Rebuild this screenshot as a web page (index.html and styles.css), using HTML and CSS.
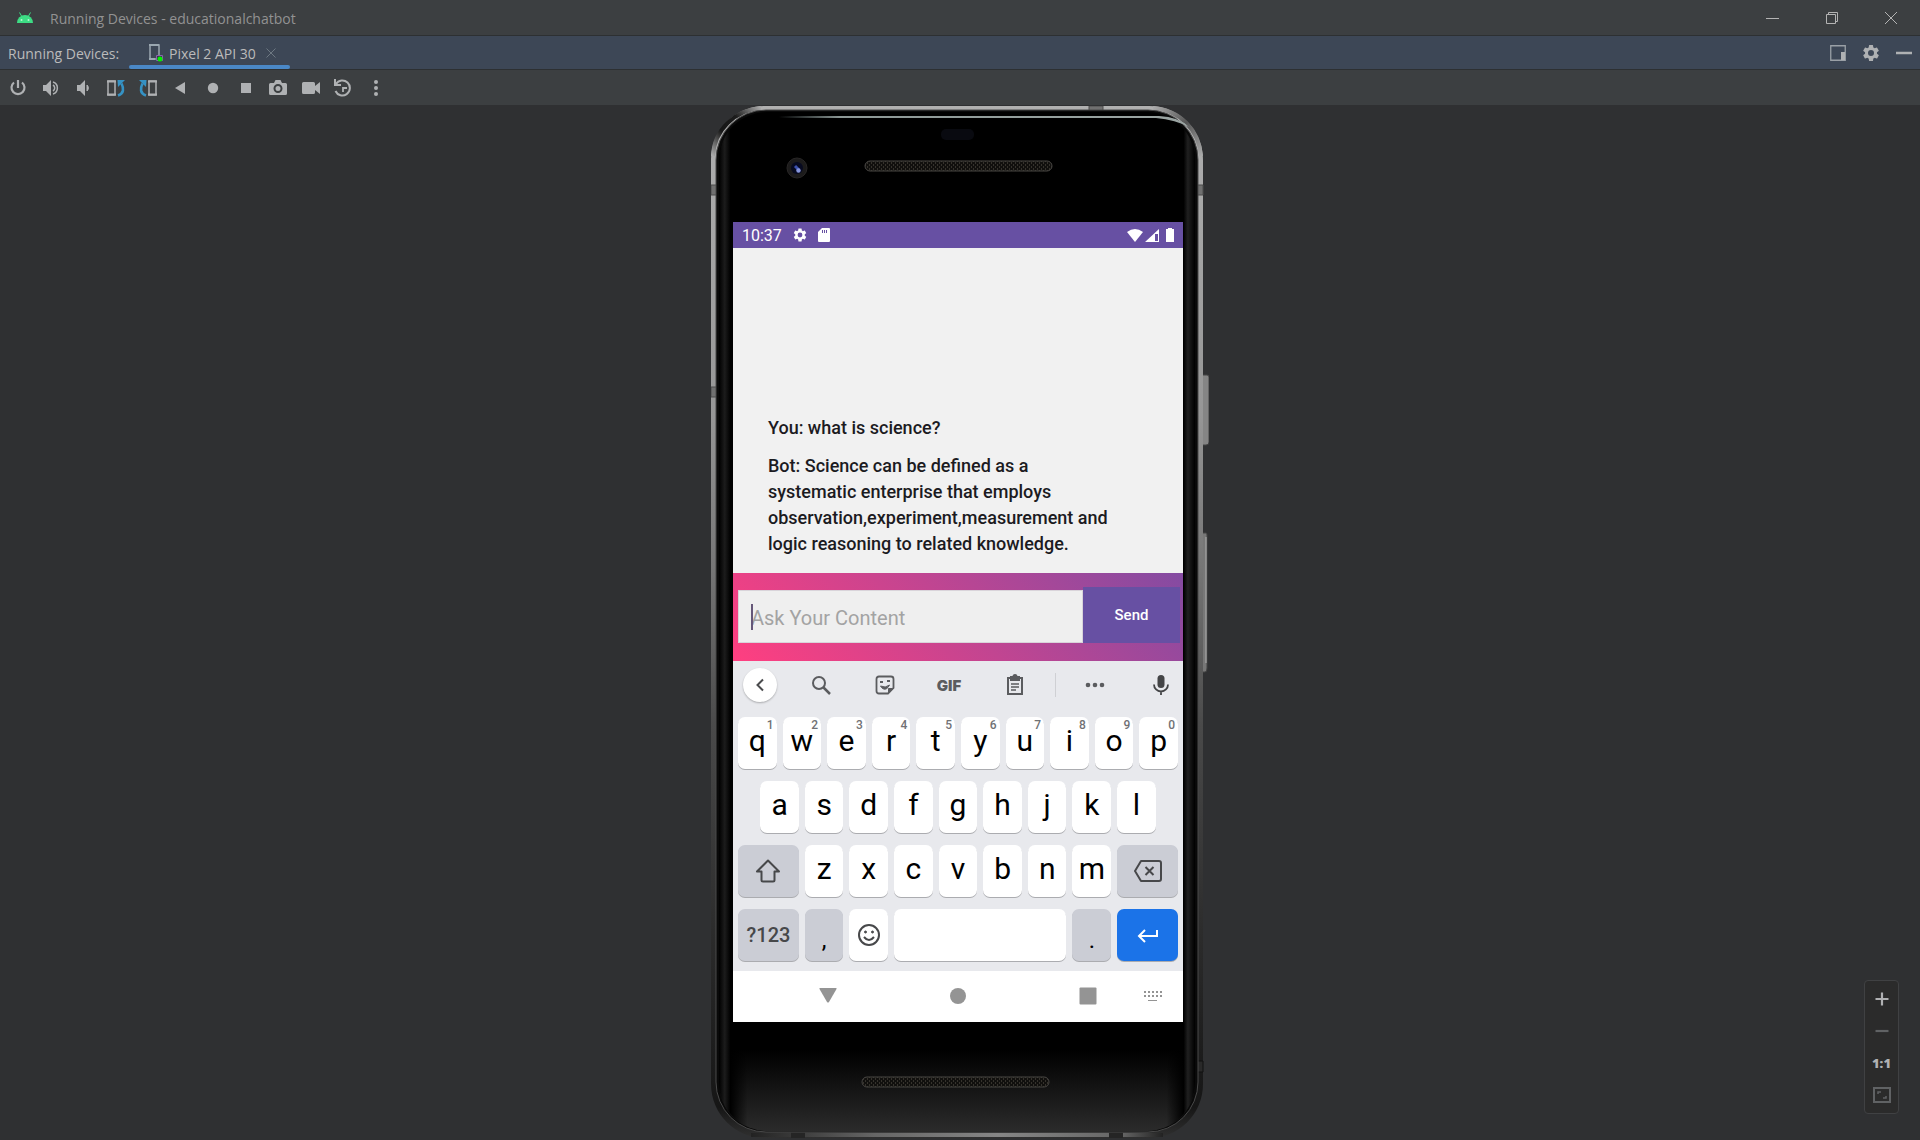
FILE: index.html
```html
<!DOCTYPE html>
<html lang="en">
<head>
<meta charset="utf-8">
<meta name="viewport" content="width=device-width, initial-scale=1">
<title>Running Devices - educationalchatbot</title>
<link rel="stylesheet" href="styles.css">
</head>
<body>
<header class="titlebar">
  <svg class="logo" width="18" height="12" viewBox="0 0 18 12"><path d="M1 11a8 8 0 0 1 16 0z" fill="#3ddc84"/><path d="M3.500.5 5.500 4M14.500.5 12.500 4" stroke="#3ddc84" stroke-width="1"/><circle cx="5.500" cy="8" r="1" fill="#b9f5d2"/><circle cx="12.500" cy="8" r="1" fill="#b9f5d2"/></svg>
  <h1 class="window-title">Running Devices - educationalchatbot</h1>
  <div class="window-controls">
    <button aria-label="Minimize"><svg width="14" height="14" viewBox="0 0 14 14"><path d="M0 7.500h13" stroke="#b4b4b4"/></svg></button>
    <button aria-label="Restore"><svg width="14" height="14" viewBox="0 0 14 14" fill="none" stroke="#b4b4b4"><path d="M1.500 3.500h9v9h-9zM3.500 3V1.500h9v9H11"/></svg></button>
    <button aria-label="Close"><svg width="14" height="14" viewBox="0 0 14 14"><path d="m1 1 12 12M13 1 1 13" stroke="#b4b4b4"/></svg></button>
  </div>
</header>

<nav class="tabbar">
  <span class="tabbar-label">Running Devices:</span>
  <div class="tab">
    <svg width="16" height="18" viewBox="0 0 16 18"><path d="M2 1h9v11M2 1v14h6" fill="none" stroke="#9aa7b0" stroke-width="1.500"/><path d="M1 1h10M1 15h6" stroke="#9aa7b0" stroke-width="2"/><path d="M8.500 11.500h6v5h-6z" fill="#3d3450" stroke="#8a63b0"/><circle cx="12" cy="15" r="2.500" fill="#00f000"/></svg>
    <a href="#device" class="tab-name">Pixel 2 API 30</a>
    <button class="tab-close" aria-label="Close tab"><svg width="10" height="10" viewBox="0 0 10 10"><path d="m.5.5 9 9m0-9-9 9" stroke="#6d7882"/></svg></button>
  </div>
  <div class="tab-tools">
    <button aria-label="Dock"><svg width="16" height="16" viewBox="0 0 16 16"><path d="M.75.75h14.500v14.500H.75z" fill="none" stroke="#9aa0a6" stroke-width="1.300"/><path d="M11 7h4v8h-4z" fill="#afb1b3"/></svg></button>
    <button aria-label="Settings"><svg width="20" height="20" viewBox="0 0 24 24"><use href="#gear" fill="#afb1b3"/></svg></button>
    <button aria-label="Hide"><svg width="16" height="16" viewBox="0 0 16 16"><path d="M0 8h16" stroke="#afb1b3" stroke-width="2.500"/></svg></button>
  </div>
</nav>

<div class="toolbar">
  <div class="tools">
    <button aria-label="Power"><svg width="18" height="18" viewBox="0 0 18 18" fill="none" stroke="#afb1b3" stroke-width="2.200"><path d="M9 1v8M5 3.500a6.500 6.500 0 1 0 8 0"/></svg></button>
    <button aria-label="Volume up"><svg width="18" height="18" viewBox="0 0 18 18"><path d="M1 6h3l5-5v16l-5-5H1z" fill="#afb1b3"/><path d="M11 6a3.500 3.500 0 0 1 0 6M11 3a6.300 6.300 0 0 1 0 12" fill="none" stroke="#afb1b3" stroke-width="1.500"/></svg></button>
    <button aria-label="Volume down"><svg width="18" height="18" viewBox="0 0 18 18"><path d="M3 6h3l5-5v16l-5-5H3z" fill="#afb1b3"/><path d="M13 6v6a4 4 0 0 0 0-6z" fill="#afb1b3" stroke="#afb1b3"/></svg></button>
    <button aria-label="Rotate left"><svg width="20" height="18" viewBox="0 0 20 18" fill="none"><path d="M2 2h7v14H2z" stroke="#afb1b3" stroke-width="1.500"/><path d="M1 2.500h9M1 15.500h9" stroke="#afb1b3" stroke-width="2"/><path d="M12 16.500c6-2 6-7 3.500-12" stroke="#3592c4" stroke-width="2.600"/><path d="M11.500 1H19l-7 7z" fill="#3592c4"/></svg></button>
    <button aria-label="Rotate right"><svg width="20" height="18" viewBox="0 0 20 18" fill="none"><path d="M11 2h7v14h-7z" stroke="#afb1b3" stroke-width="1.500"/><path d="M10 2.500h9M10 15.500h9" stroke="#afb1b3" stroke-width="2"/><path d="M8 16.500c-6-2-6-7-3.500-12" stroke="#3592c4" stroke-width="2.600"/><path d="M8.500 1H1l7 7z" fill="#3592c4"/></svg></button>
    <button aria-label="Back"><svg width="12" height="12" viewBox="0 0 12 12"><path d="M10 0v12L0 6z" fill="#afb1b3"/></svg></button>
    <button aria-label="Home"><svg width="12" height="12" viewBox="0 0 12 12"><circle cx="6" cy="6" r="5.200" fill="#afb1b3"/></svg></button>
    <button aria-label="Overview"><svg width="12" height="12" viewBox="0 0 12 12"><path d="M1 1h10v10H1z" fill="#afb1b3"/></svg></button>
    <button aria-label="Screenshot"><svg width="18" height="16" viewBox="0 0 18 16"><path d="M5 3l1.500-3h5L13 3h3.500Q18 3 18 4.500v9q0 1.500-1.500 1.500h-15Q0 15 0 13.500v-9Q0 3 1.500 3z" fill="#afb1b3"/><circle cx="9" cy="8.500" r="3.500" fill="#afb1b3" stroke="#3c3f41" stroke-width="2"/></svg></button>
    <button aria-label="Record"><svg width="18" height="12" viewBox="0 0 18 12"><path d="M0 1.500Q0 0 1.500 0h10Q13 0 13 1.500V4l5-4v12l-5-4v2.500q0 1.500-1.500 1.500h-10Q0 12 0 10.500z" fill="#afb1b3"/></svg></button>
    <button aria-label="Snapshots"><svg width="20" height="18" viewBox="0 0 20 18" fill="none" stroke="#afb1b3" stroke-width="2"><path d="M3 5a7.500 7.500 0 1 1-.5 7M2 0v6h6"/><path d="M14 9h-4v4" stroke-width="1.800"/></svg></button>
    <button aria-label="More"><svg width="4" height="16" viewBox="0 0 4 16" fill="#afb1b3"><circle cx="2" cy="2" r="2"/><circle cx="2" cy="8" r="2"/><circle cx="2" cy="14" r="2"/></svg></button>
  </div>
</div>

<main class="stage" id="device">
  <div class="phone">
    <svg class="phone-frame" width="498" height="1032" viewBox="0 0 498 1032">
      <defs>
        <linearGradient id="metal" x1="0" y1="0" x2="0" y2="1"><stop offset="0" stop-color="#b0b0b0"/><stop offset=".3" stop-color="#969696"/><stop offset=".45" stop-color="#757575"/><stop offset=".6" stop-color="#4a4a4a"/><stop offset=".8" stop-color="#2c2c2c"/><stop offset=".97" stop-color="#161616"/><stop offset="1" stop-color="#303030"/></linearGradient>
        <linearGradient id="glass" x1="0" y1="0" x2="0" y2="1"><stop offset="0" stop-color="#000"/><stop offset=".92" stop-color="#000"/><stop offset=".96" stop-color="#151515"/><stop offset="1" stop-color="#2b2b2b"/></linearGradient>
        <linearGradient id="edge" x1="0" y1="0" x2="1" y2="0"><stop offset="0" stop-color="#000"/><stop offset=".012" stop-color="#1c1c1c"/><stop offset=".024" stop-color="#000"/><stop offset=".06" stop-color="#000" stop-opacity="0"/><stop offset=".94" stop-color="#000" stop-opacity="0"/><stop offset=".976" stop-color="#000"/><stop offset=".985" stop-color="#202020"/><stop offset="1" stop-color="#000"/></linearGradient>
        <linearGradient id="shine" x1="0" y1="0" x2="1" y2="0"><stop offset="0" stop-color="#899" stop-opacity="0"/><stop offset=".15" stop-color="#8d9896"/><stop offset="1" stop-color="#9ba5a3"/></linearGradient>
        <linearGradient id="foot" x1="0" y1="0" x2="1" y2="0"><stop offset="0" stop-color="#222"/><stop offset=".3" stop-color="#666"/><stop offset=".6" stop-color="#868686"/><stop offset=".9" stop-color="#666"/><stop offset="1" stop-color="#222"/></linearGradient>
        <linearGradient id="cornerL" x1="0" y1="1" x2="1" y2="0"><stop offset="0" stop-color="#aaa"/><stop offset=".35" stop-color="#161616"/><stop offset=".65" stop-color="#1c1c1c"/><stop offset="1" stop-color="#aaa"/></linearGradient>
        <linearGradient id="cornerR" x1="0" y1="0" x2="1" y2="1"><stop offset="0" stop-color="#aaa"/><stop offset=".5" stop-color="#555"/><stop offset="1" stop-color="#aaa"/></linearGradient>
        <pattern id="mesh" width="4" height="4" patternUnits="userSpaceOnUse"><path d="M0 0h4v4H0z" fill="#11100e"/><path d="M0 0h1v2H0zM2 2h1v2H2z" fill="#35322c"/></pattern>
      </defs>
      <path d="M491 269h5q2 0 2 2v65q0 3-3 3h-4z" fill="#858585" stroke="#444"/>
      <path d="M491 427h4q1 0 1 2v133q0 4-2 4h-3z" fill="#777" stroke="#444"/>
      <path d="M495 431v126" stroke="#b0b0b0"/>
      <rect width="492" height="1032" rx="54" fill="url(#metal)"/>
      <path d="M2 50C3 24 24 4 50 2" fill="none" stroke="url(#cornerL)" stroke-width="4"/>
      <path d="M442 2c27 2 46 22 48 48" fill="none" stroke="url(#cornerR)" stroke-width="4"/>
      <path d="M40 1027h412v4H40z" fill="url(#foot)"/>
      <path d="M378 0h14v6h-14zM0 79h6v10H0zM486 79h6v10h-6zM0 281h6v10H0z" fill="#707070" stroke="#4c4c4c"/>
      <path d="M80 1026h14v6H80zM398 1026h14v6h-14z" fill="#252525"/>
      <path d="M486 955h6v11h-6z" fill="#292929" stroke="#111"/>
      <rect x="5" y="4" width="482" height="1022" rx="50" fill="#090909" stroke="#4a4a4a"/>
      <rect x="8" y="6" width="476" height="1019" rx="48" fill="url(#glass)"/>
      <rect x="8" y="6" width="476" height="1019" rx="48" fill="url(#edge)"/>
      <path d="M68 10h380q20 1 30 11-13-7-33-9H68z" fill="url(#shine)"/>
      <rect x="230" y="23" width="33" height="11" rx="5" fill="#090a10"/>
      <circle cx="86" cy="62" r="10" fill="#1c1b1b" stroke="#282626"/>
      <circle cx="86" cy="62" r="6" fill="#070a20"/>
      <path d="m84 60 4 4" stroke="#3b50ad" stroke-width="3"/><circle cx="87.500" cy="64.500" r="2.200" fill="#8796dd"/>
      <rect x="154" y="55" width="187" height="10" rx="5" fill="url(#mesh)" stroke="#484643"/>
      <rect x="151" y="971" width="187" height="10" rx="5" fill="url(#mesh)" stroke="#484643"/>
    </svg>

    <section class="screen">
      <div class="statusbar">
        <time>10:37</time>
        <svg width="16" height="16" viewBox="0 0 24 24"><path id="gear" d="M19.140 12.940c.04-.3.060-.61.060-.94s-.02-.64-.07-.94l2.030-1.580a.49.490 0 0 0 .12-.61l-1.920-3.320a.49.490 0 0 0-.59-.22l-2.390.96a7 7 0 0 0-1.620-.94l-.36-2.540A.48.480 0 0 0 13.920 2.400h-3.840a.48.480 0 0 0-.47.410l-.36 2.540a7.300 7.300 0 0 0-1.620.94l-2.390-.96a.48.480 0 0 0-.59.220L2.740 8.870a.47.470 0 0 0 .12.610l2.030 1.580a7 7 0 0 0 0 1.880l-2.030 1.580a.49.490 0 0 0-.12.610l1.920 3.320c.12.220.37.290.59.220l2.390-.96c.5.380 1.030.7 1.620.94l.36 2.540c.05.240.24.410.48.410h3.840c.24 0 .44-.17.470-.41l.36-2.540a7 7 0 0 0 1.620-.94l2.390.96c.22.080.47 0 .59-.22l1.920-3.320a.47.470 0 0 0-.12-.61zM12 15.600a3.600 3.600 0 1 1 0-7.200 3.600 3.600 0 0 1 0 7.200z"/></svg>
        <svg width="12" height="14" viewBox="0 0 12 14"><path fill-rule="evenodd" d="M4 0h7q1 0 1 1v12q0 1-1 1H1q-1 0-1-1V4zM4 2v3h1V2zm2 0v3h1V2zm2 0v3h1V2z"/></svg>
        <div class="status-right">
          <svg width="16" height="13" viewBox="0 0 16 13"><path d="M8 13 0 3q8-6 16 0z"/></svg>
          <svg width="14" height="13" viewBox="0 0 14 13"><path fill-rule="evenodd" d="M14 0v13H0zM10 5v7h3V5z"/></svg>
          <svg width="8" height="14" viewBox="0 0 8 14"><path d="M2 0h4v1h2v13H0V1h2z"/></svg>
        </div>
      </div>

      <div class="chat">
        <p>You: what is science?</p>
        <p>Bot: Science can be defined as a systematic enterprise that employs observation,experiment,measurement and logic reasoning to related knowledge.</p>
      </div>

      <form class="composer">
        <div class="field"><input type="text" placeholder="Ask Your Content" aria-label="Ask Your Content"><span class="caret"></span></div>
        <button type="button" class="send">Send</button>
      </form>

      <div class="keyboard">
        <div class="suggestions">
          <button class="collapse" aria-label="Collapse"><svg width="10" height="14" viewBox="0 0 10 14"><path d="M8 1.500 2.500 7 8 12.500" fill="none" stroke="#4a4b4d" stroke-width="2"/></svg></button>
          <button aria-label="Search"><svg width="20" height="20" viewBox="0 0 20 20" fill="none" stroke="#5b5c5f" stroke-width="2"><circle cx="8" cy="8" r="6"/><path d="m12.500 12.500 6.500 6.500" stroke-width="2.500"/></svg></button>
          <button aria-label="Stickers"><svg width="20" height="20" viewBox="0 0 20 20" fill="none" stroke="#5b5c5f" stroke-width="1.800"><path d="M4 1.500h12q2.500 0 2.500 2.500v9L13 18.500H4Q1.500 18.500 1.500 16V4Q1.500 1.500 4 1.500z"/><path d="M13.500 18v-4.500H18z" fill="#5b5c5f" stroke-width="1"/><path d="M5.500 11q5 2.500 9-1-3 6-7 3.500z" fill="#5b5c5f" stroke-width="1"/><path d="M5 7h3M12 6h3" stroke-width="2"/></svg></button>
          <button class="gif">GIF</button>
          <button aria-label="Clipboard"><svg width="18" height="22" viewBox="0 0 18 22" fill="none" stroke="#5b5c5f" stroke-width="2"><path d="M2 4h14v16H2z"/><path d="M5 3h8v3H5z" fill="#5b5c5f"/><circle cx="9" cy="2.500" r="1.500"/><path d="M5 10h8M5 13h8M5 16h5" stroke-width="1.500"/></svg></button>
          <span class="divider"></span>
          <button aria-label="More"><svg width="20" height="6" viewBox="0 0 20 6" fill="#5b5c5f"><circle cx="3" cy="3" r="2.300"/><circle cx="10" cy="3" r="2.300"/><circle cx="17" cy="3" r="2.300"/></svg></button>
          <button class="mic" aria-label="Voice input"><svg width="16" height="22" viewBox="0 0 16 22"><rect x="4.500" y="1" width="7" height="13" rx="3.500" fill="#444547"/><path d="M1 10.500a7 7 0 0 0 14 0M8 17v4" fill="none" stroke="#444547" stroke-width="1.800"/></svg></button>
        </div>
        <div class="keys">
          <button>q<sup>1</sup></button><button>w<sup>2</sup></button><button>e<sup>3</sup></button><button>r<sup>4</sup></button><button>t<sup>5</sup></button><button>y<sup>6</sup></button><button>u<sup>7</sup></button><button>i<sup>8</sup></button><button>o<sup>9</sup></button><button>p<sup>0</sup></button>
          <button class="indent">a</button><button>s</button><button>d</button><button>f</button><button>g</button><button>h</button><button>j</button><button>k</button><button>l</button>
          <button class="wide alt row-start" aria-label="Shift"><svg width="26" height="26" viewBox="0 0 26 26"><path d="M13 2.500 2 13.500h4.500V22q0 1.500 1.500 1.500h10q1.500 0 1.500-1.500v-8.500H24z" fill="none" stroke="#47484a" stroke-width="2" stroke-linejoin="round"/></svg></button><button>z</button><button>x</button><button>c</button><button>v</button><button>b</button><button>n</button><button>m</button><button class="wide alt" aria-label="Backspace"><svg width="28" height="24" viewBox="0 0 28 24" fill="none" stroke="#47484a" stroke-width="2" stroke-linejoin="round"><path d="M7 2h18q2 0 2 2v16q0 2-2 2H7l-6-10z"/><path d="m11.500 8 8 8m0-8-8 8"/></svg></button>
          <button class="wide alt symbols">?123</button><button class="alt punct">,</button><button class="emoji" aria-label="Emoji"><svg width="24" height="24" viewBox="0 0 24 24" fill="none" stroke="#47484a" stroke-width="2"><circle cx="12" cy="12" r="10"/><path d="M7 14q5 6 10 0"/><circle cx="8.500" cy="9" r="1" fill="#47484a" stroke-width="1"/><circle cx="15.500" cy="9" r="1" fill="#47484a" stroke-width="1"/></svg></button><button class="space" aria-label="Space"></button><button class="alt punct">.</button><button class="wide enter" aria-label="Enter"><svg width="22" height="16" viewBox="0 0 22 16"><path d="M20 3v6H3M8 3 2 9l6 6" fill="none" stroke="#fff" stroke-width="2"/></svg></button>
        </div>
      </div>

      <div class="navbar">
        <div class="nav-main">
          <button aria-label="Back"><svg width="18" height="18" viewBox="0 0 18 18"><path d="M1 1h16q1 0 .5 1L10 15q-1 1-2 0L.5 2Q0 1 1 1z"/></svg></button>
          <button aria-label="Home"><svg width="18" height="18" viewBox="0 0 18 18"><circle cx="9" cy="9" r="8"/></svg></button>
          <button aria-label="Overview"><svg width="18" height="18" viewBox="0 0 18 18"><rect x=".5" y=".5" width="17" height="17" rx="1"/></svg></button>
        </div>
        <button aria-label="Switch keyboard"><svg width="18" height="12" viewBox="0 0 18 12" fill="none" stroke="#949494" stroke-width="2"><path d="M0 2h18M0 6h18" stroke-dasharray="2"/><path d="M4 10.500h9" stroke-width="1"/></svg></button>
      </div>
    </section>
  </div>

  <div class="zoom">
    <button aria-label="Zoom in"><svg width="14" height="14" viewBox="0 0 14 14"><path d="M7 .5v13M.5 7h13" stroke="#b0b1b3" stroke-width="2.200"/></svg></button>
    <button aria-label="Zoom out"><svg width="14" height="14" viewBox="0 0 14 14"><path d="M.5 7h13" stroke="#606264" stroke-width="2.200"/></svg></button>
    <button class="actual">1:1</button>
    <button aria-label="Fit"><svg width="18" height="16" viewBox="0 0 18 16" fill="none" stroke="#606264"><path d="M1 1h16v14H1z" stroke-width="2"/><path d="M5 7V5h3M13 9v2h-3" stroke-width="1.500"/></svg></button>
  </div>
</main>
</body>
</html>
```

FILE: styles.css
```css
* { box-sizing: border-box; }
body {
  margin: 0;
  min-height: 100vh;
  display: flex;
  flex-direction: column;
  background: #2f3032;
  color: #bbb;
  font-family: "Open Sans", "Noto Sans", sans-serif;
  font-size: 14px;
}
button {
  display: flex;
  align-items: center;
  justify-content: center;
  padding: 0;
  border: 0;
  background: none;
  color: inherit;
  font: inherit;
}
svg { display: block; flex: none; }

.titlebar {
  display: flex;
  align-items: center;
  height: 36px;
  padding-left: 16px;
  border-bottom: 1px solid #2d3032;
  background: #3c3f41;
}
.window-title {
  flex: 1;
  margin: 0 0 0 16px;
  padding-top: 2px;
  color: #929292;
  font-size: 14px;
  font-weight: 400;
}
.window-controls { display: flex; }
.window-controls button { width: 59px; height: 35px; }

.tabbar {
  display: flex;
  align-items: center;
  height: 34px;
  padding: 0 8px;
  border-bottom: 1px solid #2d3032;
  background: #3d4756;
}
.tabbar-label { width: 121px; padding-top: 2px; }
.tab {
  display: flex;
  align-items: center;
  width: 161px;
  height: 33px;
  padding-left: 19px;
  gap: 5px;
  position: relative;
}
.tab::after {
  content: "";
  position: absolute;
  inset: auto 0 0;
  height: 4px;
  border-radius: 2px;
  background: #4a88c7;
}
.tab-name { width: 92px; padding-top: 2px; color: inherit; text-decoration: none; white-space: nowrap; }
.tab-tools { display: flex; gap: 15px; margin-left: auto; }

.toolbar {
  display: flex;
  height: 35px;
  padding-left: 2px;
  background: #3c3f41;
}
.tools {
  display: grid;
  grid-template-columns: repeat(12, 1fr);
  align-items: center;
  width: 390px;
}

.stage {
  flex: 1;
  position: relative;
  display: flex;
  justify-content: center;
  align-items: flex-start;
  padding-top: 1px;
  background: #2f3032;
}
.phone {
  position: relative;
  width: 498px;
  padding: 116px 26px 116px 22px;
}
.phone-frame { position: absolute; inset: 0; }
.screen {
  position: relative;
  font-family: Roboto, sans-serif;
  background: #f1f1f1;
}
.statusbar {
  display: flex;
  align-items: center;
  gap: 10px;
  height: 26px;
  padding: 0 9px;
  background: #6750a3;
  color: #fff;
  fill: #fff;
  font-size: 16px;
}
.statusbar time { width: 40px; }
.status-right { display: flex; align-items: center; gap: 2px; margin-left: auto; }
.status-right svg:last-child { margin-left: 5px; }

.chat {
  display: flex;
  flex-direction: column;
  justify-content: flex-end;
  gap: 12px;
  min-height: 325px;
  padding: 0 72px 16px 35px;
  color: #1c1b1f;
  font-size: 18px;
  font-weight: 500;
  line-height: 26px;
}
.chat p { margin: 0; }

.composer {
  display: flex;
  align-items: flex-end;
  height: 88px;
  padding: 0 3px 18px 5px;
  background: linear-gradient(45deg, #ff3f80, #844ba2);
}
.field { position: relative; flex: 1; }
.field input {
  display: block;
  width: 100%;
  height: 53px;
  padding: 2px 0 0 12px;
  border: 1px solid #d9d4da;
  border-radius: 0;
  background: #efefef;
  font-family: inherit;
  font-size: 20px;
}
.field input::placeholder { color: #a3a3a3; opacity: 1; }
.caret {
  position: absolute;
  left: 13px;
  top: 14px;
  width: 2px;
  height: 26px;
  background: #655779;
}
.send {
  width: 97px;
  height: 56px;
  background: #6750a3;
  color: #fff;
  font-size: 15px;
  font-weight: 500;
}

.keyboard { background: #e8e9ed; padding-bottom: 10px; }
.suggestions {
  display: grid;
  grid-template-columns: 54px 68px 60px 68px 64px 16px 64px 1fr;
  align-items: center;
  justify-items: center;
  height: 56px;
  padding-bottom: 8px;
}
.collapse {
  width: 34px;
  height: 34px;
  border-radius: 50%;
  background: #fff;
  box-shadow: 0 1px 2px #0004;
}
.gif { color: #5b5c5f; font-family: Inter, sans-serif; font-size: 15px; font-weight: 900; }
.divider { width: 1px; height: 24px; background: #cfd0d4; }
.mic { justify-self: end; padding-right: 14px; }
.keys {
  display: grid;
  grid-template-columns: repeat(20, 1fr);
  grid-auto-rows: 52px;
  gap: 12px 6px;
  padding: 0 5px;
}
.keys button {
  position: relative;
  grid-column: span 2;
  padding-bottom: 4px;
  border-radius: 7px;
  background: #fff;
  box-shadow: 0 1px 0 #abacb0;
  color: #000;
  font-size: 30px;
  line-height: 36px;
}
.keys .indent { grid-column: 2 / span 2; }
.keys .wide { grid-column: span 3; padding-bottom: 0; }
.keys .row-start { grid-column: 1 / span 3; }
.keys .space { grid-column: span 8; }
.keys .emoji { padding-bottom: 0; }
.keys .alt { background: #cbcdd5; }
.keys .enter { background: #1b73e8; }
.keys .symbols { color: #47484a; font-size: 20px; font-weight: 500; }
.keys .punct { padding: 10px 0 0; font-size: 24px; }
.keys sup {
  position: absolute;
  top: 1px;
  right: 3px;
  color: #707174;
  font-size: 12px;
  font-weight: 500;
  line-height: 14px;
}

.navbar {
  display: flex;
  align-items: center;
  justify-content: space-between;
  height: 51px;
  padding: 0 21px 2px 86px;
  background: #fff;
  fill: #949494;
}
.nav-main { display: flex; gap: 112px; }

.zoom {
  position: absolute;
  right: 21px;
  bottom: 26px;
  width: 35px;
  padding: 2px 0;
  border: 1px solid #404143;
  border-radius: 4px;
  background: #2b2b2b;
}
.zoom button { width: 100%; height: 32px; }
.zoom .actual { color: #b0b1b3; font-size: 13px; font-weight: 800; }
```
